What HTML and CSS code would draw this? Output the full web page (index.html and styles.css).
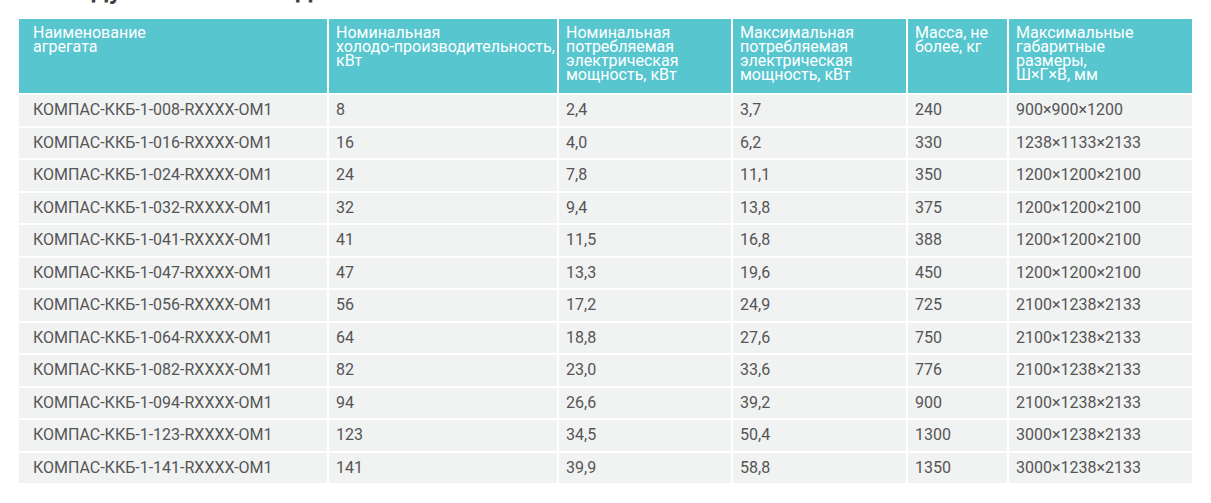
FILE: index.html
```html
<!DOCTYPE html>
<html lang="ru">
<head>
<meta charset="utf-8">
<title>С воздушным охлаждением</title>
<link rel="stylesheet" href="styles.css">
</head>
<body>
<div class="page">
  <h2 class="title">С воздушным охлаждением</h2>
  <table class="spec">
    <colgroup>
      <col class="c1"><col class="c2"><col class="c3"><col class="c4"><col class="c5"><col class="c6">
    </colgroup>
    <thead>
      <tr>
        <th class="first">Наименование<br>агрегата</th>
        <th>Номинальная <span class="nowrap">холодо-производительность,</span> кВт</th>
        <th>Номинальная потребляемая электрическая мощность, кВт</th>
        <th>Максимальная потребляемая электрическая мощность, кВт</th>
        <th>Масса, не более, кг</th>
        <th class="last">Максимальные габаритные размеры, Ш×Г×В, мм</th>
      </tr>
    </thead>
    <tbody>
      <tr><td class="first">КОМПАС-ККБ-1-008-RXXXX-OM1</td><td>8</td><td>2,4</td><td>3,7</td><td>240</td><td>900×900×1200</td></tr>
      <tr><td class="first">КОМПАС-ККБ-1-016-RXXXX-OM1</td><td>16</td><td>4,0</td><td>6,2</td><td>330</td><td>1238×1133×2133</td></tr>
      <tr><td class="first">КОМПАС-ККБ-1-024-RXXXX-OM1</td><td>24</td><td>7,8</td><td>11,1</td><td>350</td><td>1200×1200×2100</td></tr>
      <tr><td class="first">КОМПАС-ККБ-1-032-RXXXX-OM1</td><td>32</td><td>9,4</td><td>13,8</td><td>375</td><td>1200×1200×2100</td></tr>
      <tr><td class="first">КОМПАС-ККБ-1-041-RXXXX-OM1</td><td>41</td><td>11,5</td><td>16,8</td><td>388</td><td>1200×1200×2100</td></tr>
      <tr><td class="first">КОМПАС-ККБ-1-047-RXXXX-OM1</td><td>47</td><td>13,3</td><td>19,6</td><td>450</td><td>1200×1200×2100</td></tr>
      <tr><td class="first">КОМПАС-ККБ-1-056-RXXXX-OM1</td><td>56</td><td>17,2</td><td>24,9</td><td>725</td><td>2100×1238×2133</td></tr>
      <tr><td class="first">КОМПАС-ККБ-1-064-RXXXX-OM1</td><td>64</td><td>18,8</td><td>27,6</td><td>750</td><td>2100×1238×2133</td></tr>
      <tr><td class="first">КОМПАС-ККБ-1-082-RXXXX-OM1</td><td>82</td><td>23,0</td><td>33,6</td><td>776</td><td>2100×1238×2133</td></tr>
      <tr><td class="first">КОМПАС-ККБ-1-094-RXXXX-OM1</td><td>94</td><td>26,6</td><td>39,2</td><td>900</td><td>2100×1238×2133</td></tr>
      <tr><td class="first">КОМПАС-ККБ-1-123-RXXXX-OM1</td><td>123</td><td>34,5</td><td>50,4</td><td>1300</td><td>3000×1238×2133</td></tr>
      <tr><td class="first">КОМПАС-ККБ-1-141-RXXXX-OM1</td><td>141</td><td>39,9</td><td>58,8</td><td>1350</td><td>3000×1238×2133</td></tr>
    </tbody>
  </table>
</div>
</body>
</html>
```

FILE: styles.css
```css
html, body {
  margin: 0;
  padding: 0;
  background: #ffffff;
}

.page {
  padding: 0 17px;
  font-family: Roboto, "Noto Sans", Arial, sans-serif;
}

.title {
  margin: -28px 0 0 3px;
  font-size: 28px;
  line-height: 34px;
  font-weight: 500;
  color: #3f3f3f;
  height: 36px;
  overflow: hidden;
}

.spec {
  border-collapse: separate;
  border-spacing: 2px;
  table-layout: fixed;
  width: 1177px;
  margin-top: 9px;
}

.c1 { width: 308px; }
.c2 { width: 228px; }
.c3 { width: 172px; }
.c4 { width: 173px; }
.c5 { width: 99px; }
.c6 { width: 183px; }

.spec th {
  background: #58c6cf;
  color: #ffffff;
  font-weight: 400;
  font-size: 16px;
  line-height: 14px;
  text-align: left;
  vertical-align: top;
  padding: 7px 7px 0 7px;
  height: 67px;
}

.spec th.last {
  padding-right: 50px;
}

.nowrap {
  white-space: nowrap;
}

.spec td {
  background: #f1f2f2;
  color: #555555;
  font-size: 16px;
  line-height: 22.5px;
  padding: 4px 7px;
  text-align: left;
  vertical-align: middle;
}

.spec .first {
  padding-left: 14px;
}
```
